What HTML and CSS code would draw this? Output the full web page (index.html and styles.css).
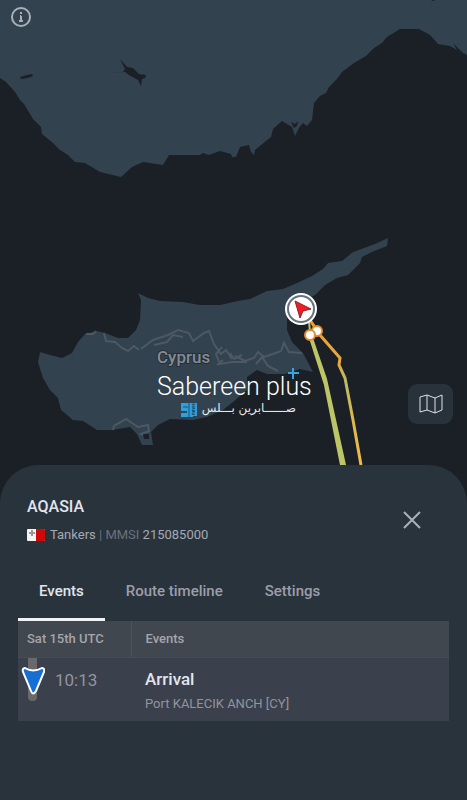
FILE: index.html
```html
<!DOCTYPE html>
<html lang="en">
<head>
    <meta charset="UTF-8">
    <meta name="viewport" content="width=device-width, initial-scale=1.0">
    <title>AQASIA - Vessel Events</title>
    <link rel="stylesheet" href="styles.css">
</head>
<body>
    <main class="app">
        <section class="map" aria-label="Map">
            <svg class="map-canvas" viewBox="0 0 467 465">
                <!-- Mainland -->
                <path class="land" d="M0 0H467V55L463 53 453 43 457 50 450 46 438 44 430 35 419 29H400L387 37 382 43 374 48 366 56 354 63 342 72 337 79 329 87 326 93 320 96 314 103 312 120 307 126 303 123 299 128 295 136 292 127 282 121 273 129 271 137 255 150 254 155 251 152 249 145 240 147 236 157H232L231 154 220 151 209 155 203 153 200 155H181L169 155 163 165 143 162 132 167 121 177 100 172 85 163 75 162 68 155 60 150 53 143 42 134 41 127 33 119 24 104 20 100 15 92 6 82 0 78Z"/>
                <path class="water" d="M107 73L123 72 125 69 120 59 127 67 133 68 139 74 146 75 145 78 142 79 141 86 138 80 129 75 125 72ZM20 77L27 75 32 74 33 76 28 78 21 79ZM291 122L295 124 298 121 297 126 294 128ZM431 0H435L433 1Z"/>
                <!-- Cyprus -->
                <path class="land" d="M40 352L50 355 62 358 72 353 78 342 85 334 97 331 105 333 118 338 128 338 136 330 140 320 141 300 138 293 148 298 160 301 183 302 200 305H220L238 301 250 299 267 291 283 289 297 283 312 276 323 269 328 263 342 261 353 252 375 244 388 238 387 246 372 252 362 257 360 263 348 275 337 278 325 285 315 295 287 310 287 330 292 342 303 353 313 372 300 369 285 374 267 374 257 370 247 377V390L233 402 223 410 207 417 193 420 170 419 158 425 151 432 153 445H142L137 434 130 427 112 430H97L83 421 73 420 61 410 58 398 50 390 43 378 38 362Z"/>
                <path class="border-line" d="M86 334H93L96 331M104 333L106 341 115 342 122 348 128 351 134 346 139 350M141 349L153 340 168 335 178 330 189 333 193 341 204 333 209 331 214 344 221 354 226 350 232 359M222 347L216 354 220 364 232 362 247 362M235 356L245 361 254 358 258 352 264 357 273 354 281 351 284 343 289 352 302 353M256 364L262 357 268 366 278 371M230 353L234 359 242 355M154 345L167 342 173 335 183 337M217 365L223 360M113 430L114 426 126 419 132 423 138 427 148 425 149 431 141 434 149 437"/>
                <path class="water" d="M143 434H149V439H144Z"/>
                <text class="country" x="157" y="363">Cyprus</text>
                <!-- Vessel track -->
                <defs>
                    <linearGradient id="track" x1="0" y1="0" x2="0" y2="1">
                        <stop offset="0" stop-color="#f2a02f"/>
                        <stop offset=".3" stop-color="#e5a83e"/>
                        <stop offset=".42" stop-color="#b5bd67"/>
                        <stop offset=".65" stop-color="#d9b94a"/>
                        <stop offset="1" stop-color="#f1bc4d"/>
                    </linearGradient>
                </defs>
                <path class="track-out" d="M309 322L311 341 313 341 326 379 345 465H341L325 385 311 341"/>
                <path class="track-in" stroke="url(#track)" d="M310 320L320 335 340 358 339 365 345 378 353 420 361 465"/>
                <circle class="stop" cx="317" cy="331" r="5"/>
                <circle class="stop" cx="310" cy="335" r="5"/>
                <circle cx="301" cy="309" r="16" fill="#fff"/>
                <circle class="vessel-ring" cx="301" cy="309" r="13"/>
                <path d="M295 301L311 309 303 311 300 318Z" fill="#ea2027" stroke="#8e2029"/>
                <!-- Channel mark -->
                <text class="channel" x="157" y="395">Sabereen plus</text>
                <path class="plus" d="M293 368V379M288 373H299"/>
                <path class="channel-logo" d="M181 403H197V416H193V417H181V413H187V411H181Z"/>
                <path class="logo-gap" d="M189 402V417M183 407H188M182 412H187"/>
                <text class="news" transform="rotate(-90 195 415)" x="195" y="415">news</text>
                <text class="channel-arabic" x="296" y="412" direction="rtl">صــــــابرين بـــلس</text>
            </svg>
            <button type="button" class="info-button" aria-label="Information">
                <svg width="22" height="22" viewBox="0 0 22 22">
                    <circle cx="11" cy="11" r="9"/>
                    <path d="M11 6V8M11 10V15M10 10H11M9 15H13"/>
                </svg>
            </button>
            <button type="button" class="layers-button" aria-label="Map layers">
                <svg width="24" height="20" viewBox="0 0 24 20">
                    <path d="M1 3L8 1 16 4 23 1V16L16 19 8 16 1 18ZM8 1V16M16 4V19"/>
                </svg>
            </button>
        </section>

        <section class="sheet">
            <header class="vessel-header">
                <div>
                    <h1>AQASIA</h1>
                    <p class="vessel-info">
                        <svg class="flag" width="18" height="12" viewBox="0 0 18 12" role="img" aria-label="Malta">
                            <rect width="18" height="12" rx="1" fill="#f5f5f5"/>
                            <path d="M9 0H17Q18 0 18 1V11Q18 12 17 12H9Z" fill="#cf0808"/>
                            <path d="M5 1V7M2 4H8" stroke="#999" stroke-width="2"/>
                        </svg>
                        <span>Tankers <span class="muted">| MMSI</span> 215085000</span>
                    </p>
                </div>
                <button type="button" class="close-button" aria-label="Close">
                    <svg width="20" height="20" viewBox="0 0 20 20">
                        <path d="M2 2L18 18M18 2L2 18"/>
                    </svg>
                </button>
            </header>

            <nav class="tabs">
                <button type="button" class="tab active">Events</button>
                <button type="button" class="tab">Route timeline</button>
                <button type="button" class="tab">Settings</button>
            </nav>

            <table class="events">
                <thead>
                    <tr>
                        <th class="time-col" scope="col">Sat 15th UTC</th>
                        <th scope="col">Events</th>
                    </tr>
                </thead>
                <tbody>
                    <tr>
                        <td class="time-cell">
                            <div class="time">
                                <svg width="24" height="44" viewBox="0 0 24 44">
                                    <path d="M7 0H16V39Q16 43 12 43Q7 43 7 39Z" fill="#69696b"/>
                                    <path d="M4 10Q12 15 21 10Q24 10 23 14L15 33Q12 38 10 33L2 14Q1 10 4 10Z" fill="#176fd6" stroke="#fff" stroke-width="2"/>
                                </svg>
                                <time>10:13</time>
                            </div>
                        </td>
                        <td class="event-cell">
                            <h2>Arrival</h2>
                            <p>Port KALECIK ANCH [CY]</p>
                        </td>
                    </tr>
                </tbody>
            </table>
        </section>
    </main>
</body>
</html>
```
FILE: styles.css
```css
* {
    box-sizing: border-box;
}
body {
    margin: 0;
    font-family: Roboto, "Liberation Sans", sans-serif;
    background-color: #1b1f26;
    color: #e2e5ec;
}
h1, h2, p {
    margin: 0;
    font-weight: 500;
}
button {
    padding: 0;
    border: none;
    background: none;
    font-family: inherit;
    cursor: pointer;
}
button svg {
    display: block;
    fill: none;
    stroke: #a9b0b8;
    stroke-width: 2;
}
.app {
    display: flex;
    flex-direction: column;
    min-height: 100vh;
}

/* Map */
.map {
    position: relative;
}
.map-canvas {
    display: block;
    width: 100%;
}
.land {
    fill: #32424e;
}
.water {
    fill: #1b1f26;
}
.border-line {
    fill: none;
    stroke: #58636d;
    stroke-width: 2;
    stroke-opacity: 0.7;
}
.country {
    font-size: 17px;
    font-weight: 500;
    fill: #838b96;
    stroke: #252e37;
    stroke-width: 2;
    paint-order: stroke;
}
.track-out {
    fill: #bdc567;
    stroke: #bdc567;
    stroke-width: 2;
}
.track-in {
    fill: none;
    stroke-width: 3;
}
.stop {
    fill: #fff;
    stroke: #e98a2b;
    stroke-width: 2;
}
.vessel-ring {
    fill: #fff;
    stroke: #66737f;
    stroke-width: 2;
}
.channel {
    font-size: 25px;
    font-weight: 300;
    fill: #fff;
}
.plus {
    stroke: #38a4df;
    stroke-width: 2;
}
.channel-logo {
    fill: #2ea0dd;
}
.logo-gap {
    stroke: #24506b;
    stroke-width: 1;
}
.news {
    font-size: 5px;
    font-weight: 700;
    fill: #17445f;
}
.channel-arabic {
    font-family: "DejaVu Sans", sans-serif;
    font-size: 12px;
    font-weight: 400;
    fill: #e4e8eb;
}
.info-button {
    position: absolute;
    top: 6px;
    left: 10px;
}
.layers-button {
    position: absolute;
    right: 14px;
    bottom: 41px;
    display: grid;
    place-items: center;
    width: 45px;
    height: 40px;
    border-radius: 9px;
    background-color: #28323b;
}
.layers-button svg {
    stroke: #dde1e6;
    stroke-width: 1;
}

/* Bottom sheet */
.sheet {
    flex: 1;
    padding: 32px 18px 32px;
    border-radius: 38px 38px 0 0;
    background-color: #29333c;
}
.vessel-header {
    display: flex;
    justify-content: space-between;
    align-items: center;
    padding: 0 27px 0 9px;
}
.vessel-header h1 {
    font-size: 16px;
    line-height: 20px;
}
.vessel-info {
    display: flex;
    align-items: center;
    gap: 5px;
    margin-top: 10px;
    font-size: 13px;
    font-weight: 400;
    line-height: 16px;
    color: #a5a9b2;
}
.muted {
    color: #6b717c;
}
.tabs {
    display: flex;
    margin-top: 20px;
}
.tab {
    height: 58px;
    padding: 0 21px;
    border-bottom: 3px solid transparent;
    font-size: 15px;
    font-weight: 500;
    color: #9d9eaa;
}
.tab.active {
    border-bottom-color: #f1f2f5;
    color: #e2e5ec;
}
.events {
    width: 100%;
    border-collapse: collapse;
    table-layout: fixed;
    background-color: #3b414c;
}
.events th {
    height: 36px;
    padding: 0 0 0 14px;
    border-bottom: 1px solid #454c56;
    background-color: #40474f;
    font-size: 13px;
    font-weight: 500;
    text-align: left;
    color: #a4a5ae;
}
.events .time-col {
    width: 113px;
    padding-left: 9px;
    border-right: 1px solid #4b535d;
}
.events td {
    height: 64px;
    padding: 0;
    vertical-align: top;
}
.time {
    display: flex;
    gap: 10px;
    padding-left: 3px;
}
.time time {
    padding-top: 12px;
    font-size: 17px;
    line-height: 20px;
    color: #92949e;
}
.events .event-cell {
    padding: 11px 0 0 14px;
}
.event-cell h2 {
    font-size: 17px;
    line-height: 20px;
}
.event-cell p {
    margin-top: 7px;
    font-size: 13px;
    font-weight: 400;
    line-height: 16px;
    color: #92949e;
}
```
